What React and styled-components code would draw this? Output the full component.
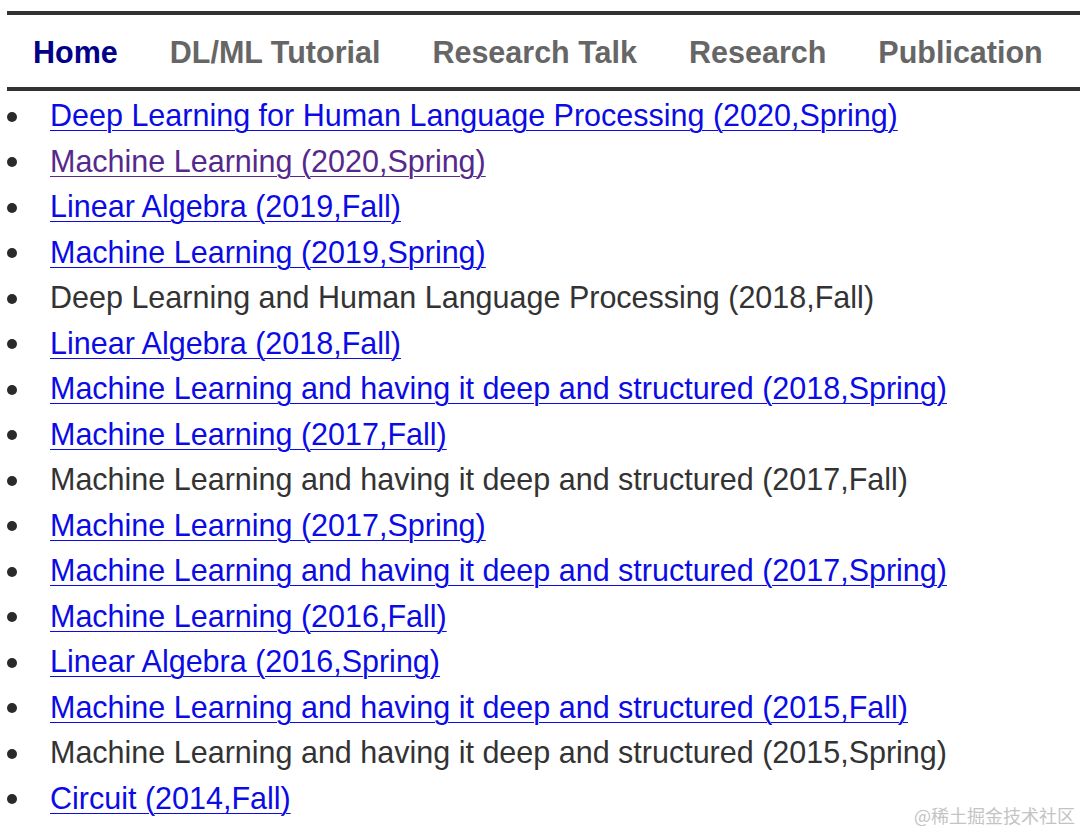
import React from 'react';
import styled, { createGlobalStyle } from 'styled-components';

const GlobalStyle = createGlobalStyle`
  html, body {
    margin: 0;
    padding: 0;
    background: #fff;
  }
  body {
    font-family: 'Liberation Sans', Arial, Helvetica, sans-serif;
    overflow: hidden;
  }
`;

const navItems = ['Home', 'DL/ML Tutorial', 'Research Talk', 'Research', 'Publication'];

const courses = [
  { title: 'Deep Learning for Human Language Processing (2020,Spring)', link: true },
  { title: 'Machine Learning (2020,Spring)', link: true, visited: true },
  { title: 'Linear Algebra (2019,Fall)', link: true },
  { title: 'Machine Learning (2019,Spring)', link: true },
  { title: 'Deep Learning and Human Language Processing (2018,Fall)' },
  { title: 'Linear Algebra (2018,Fall)', link: true },
  { title: 'Machine Learning and having it deep and structured (2018,Spring)', link: true },
  { title: 'Machine Learning (2017,Fall)', link: true },
  { title: 'Machine Learning and having it deep and structured (2017,Fall)' },
  { title: 'Machine Learning (2017,Spring)', link: true },
  { title: 'Machine Learning and having it deep and structured (2017,Spring)', link: true },
  { title: 'Machine Learning (2016,Fall)', link: true },
  { title: 'Linear Algebra (2016,Spring)', link: true },
  { title: 'Machine Learning and having it deep and structured (2015,Fall)', link: true },
  { title: 'Machine Learning and having it deep and structured (2015,Spring)' },
  { title: 'Circuit (2014,Fall)', link: true },
];

export default function App() {
  return (
    <Page>
      <GlobalStyle />
      <Nav>
        {navItems.map((item, index) => (
          <NavItem key={item} active={index === 0}>
            {item}
          </NavItem>
        ))}
      </Nav>
      <CourseList>
        {courses.map((course) => (
          <CourseItem key={course.title}>
            <Bullet />
            {course.link ? (
              <CourseLink href="#" visited={course.visited}>
                {course.title}
              </CourseLink>
            ) : (
              <span>{course.title}</span>
            )}
          </CourseItem>
        ))}
      </CourseList>
      <Watermark>@稀土掘金技术社区</Watermark>
    </Page>
  );
}

const Page = styled.div`
  position: relative;
  height: 834px;
  padding-top: 11px;
  box-sizing: border-box;
`;

const Nav = styled.nav`
  display: flex;
  align-items: center;
  margin-left: 7px;
  height: 72px;
  border-top: 4px solid #333;
  border-bottom: 4px solid #333;
`;

const NavItem = styled.span`
  padding: 0 26px;
  font-size: 30.5px;
  font-weight: bold;
  color: ${(props) => (props.active ? '#000088' : '#666')};
  white-space: nowrap;
  position: relative;
  top: 1px;
`;

const CourseList = styled.ul`
  margin: 2px 0 0;
  padding: 0;
  list-style: none;
  font-size: 30.5px;
  line-height: 45.5px;
  color: #333;
`;

const CourseItem = styled.li`
  display: flex;
  align-items: center;
  white-space: nowrap;
`;

const Bullet = styled.span`
  flex-shrink: 0;
  width: 10px;
  height: 10px;
  margin: 2px 33px 0 7px;
  border-radius: 50%;
  background: #2a2a2a;
`;

const CourseLink = styled.a`
  color: ${(props) => (props.visited ? '#56288c' : '#0b0be6')};
  text-decoration: underline;
  text-decoration-thickness: 1px;
  text-underline-offset: 4px;
`;

const Watermark = styled.div`
  position: absolute;
  right: 5px;
  bottom: 6px;
  font-family: 'Noto Sans CJK SC', sans-serif;
  font-size: 18px;
  color: #c4c4c4;
`;
